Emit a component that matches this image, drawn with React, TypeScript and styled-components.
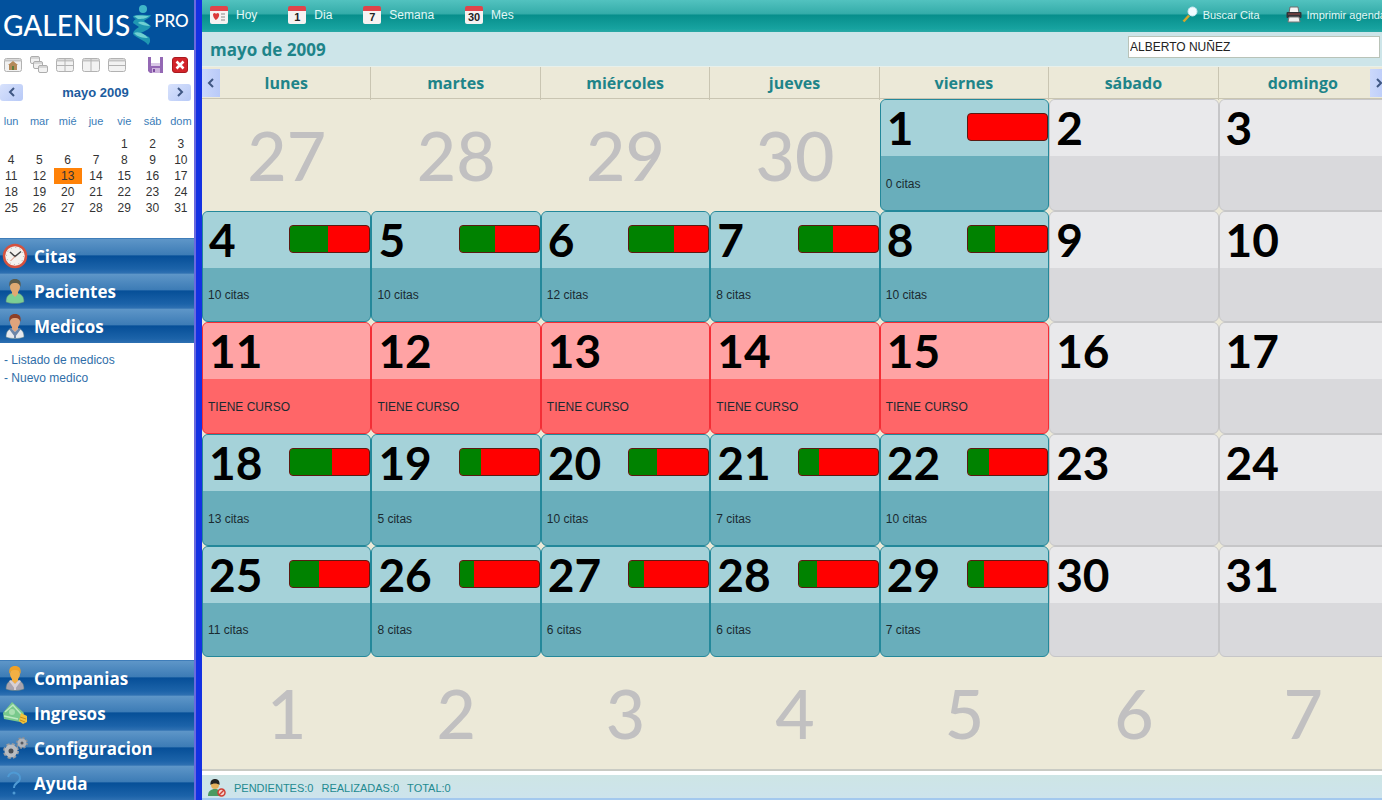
import React from "react";
import styled, { createGlobalStyle, css } from "styled-components";

const SANS = '"Liberation Sans", Arial, sans-serif';
const HUMANIST = '"Open Sans", "Noto Sans", sans-serif';
const NUMERALS = 'Lato, "Noto Sans", sans-serif';

const Global = createGlobalStyle`
  * { box-sizing: border-box; }
  body { margin: 0; background: #fff; font-family: ${SANS}; font-size: 12px; }
  button { border: 0; padding: 0; background: none; font: inherit; color: inherit; cursor: pointer; }
  svg { display: block; flex: none; }
`;

const Page = styled.div`
  display: flex;
  min-height: 100vh;
  overflow: hidden;
`;

/* ---------- sidebar ---------- */

const Sidebar = styled.aside`
  flex: none;
  width: 202px;
  display: flex;
  flex-direction: column;
  background: #fff;
  border-right: 6px solid #1431e2;
  box-shadow: inset -2px 0 0 #6a6ade;
  padding-right: 2px;
  overflow: hidden;
`;

const Brand = styled.header`
  display: flex;
  align-items: center;
  gap: 1px;
  height: 50px;
  padding: 0 3px;
  background: #02519d;
  color: #fff;
  font-family: ${NUMERALS};
  font-weight: 500;
`;

const BrandName = styled.span`
  font-size: 28px;
  line-height: 48px;
`;

const BrandEdition = styled.span`
  font-size: 17px;
  line-height: 32px;
  padding-bottom: 8px;
`;

const Tools = styled.div`
  display: flex;
  align-items: center;
  gap: 8px;
  height: 30px;
  padding: 0 6px 0 4px;
`;

const ToolButton = styled.button<{ $push?: boolean }>`
  ${(p) => p.$push && css`margin-left: auto;`}
`;

const MonthBar = styled.div`
  display: flex;
  align-items: center;
  justify-content: space-between;
  height: 24px;
  padding-right: 3px;
  color: #1c5c9e;
  font-size: 13px;
  font-weight: bold;
`;

const Arrow = styled.button`
  display: grid;
  place-items: center;
  width: 23px;
  height: 17px;
  border-radius: 3px;
  background: linear-gradient(135deg, #d8e2fc, #b7c9f7);
`;

const MiniTable = styled.table`
  width: 198px;
  margin: 8px 0 22px -3px;
  table-layout: fixed;
  border-collapse: collapse;
  text-align: center;
  color: #333;
`;

const MiniHead = styled.th`
  height: 24px;
  padding: 0 0 6px;
  font-size: 11px;
  font-weight: normal;
  color: #3a7cb8;
`;

const MiniDay = styled.td<{ $today?: boolean }>`
  height: 16px;
  padding: 0;
  line-height: 16px;
  background: ${(p) => (p.$today ? "#ff8208" : "transparent")};
`;

const NavButton = styled.button`
  display: flex;
  align-items: center;
  gap: 6px;
  width: 100%;
  height: 35px;
  padding: 0 2px;
  border-top: 1px solid #3f7db9;
  background: linear-gradient(#5e96c8 0%, #3d7cb6 46%, #064f98 50%, #1c63a9 88%, #2e70b2 100%);
  color: #fff;
  font-family: ${HUMANIST};
  font-size: 17px;
  font-weight: bold;
  text-align: left;
`;

const SubLinks = styled.ul`
  flex: 1;
  margin: 0;
  padding: 8px 4px;
  list-style: none;
  color: #2f6ea8;
  font-size: 12px;
  line-height: 18px;
`;

const SubLink = styled.a`
  color: inherit;
  text-decoration: none;
`;

/* ---------- main area ---------- */

const Main = styled.main`
  flex: 1;
  min-width: 0;
  display: flex;
  flex-direction: column;
  margin-right: -6px;
  background: #ece9d8;
`;

const Toolbar = styled.nav`
  display: flex;
  align-items: center;
  justify-content: space-between;
  height: 32px;
  padding: 0 2px 3px 8px;
  background: linear-gradient(#52c2bf 0%, #35adaa 42%, #078f8c 48%, #17a3a0 90%, #2ba9a6 100%);
  color: #e2f8f6;
`;

const Views = styled.div`
  display: flex;
  gap: 31px;
`;

const Actions = styled.div`
  display: flex;
  gap: 26px;
  font-size: 11px;
`;

const ToolbarButton = styled.button`
  display: flex;
  align-items: center;
  gap: 8px;
  white-space: nowrap;

  ${Actions} & {
    gap: 5px;
  }
`;

const TitleRow = styled.div`
  display: flex;
  align-items: center;
  justify-content: space-between;
  height: 35px;
  padding: 0 8px;
  background: #cde5e9;
  border-bottom: 1px solid #e8f0ea;
`;

const Title = styled.h1`
  margin: 0;
  padding-top: 2px;
  color: #1e8489;
  font-family: ${HUMANIST};
  font-size: 17px;
  line-height: 24px;
`;

const Search = styled.input`
  width: 252px;
  height: 22px;
  margin-bottom: 4px;
  padding: 0 1px;
  border: 1px solid #b9c3b8;
  border-radius: 0;
  outline: 0;
  background: #fff;
  color: #222;
  font: 12px ${SANS};
`;

const WeekHeader = styled.div`
  position: relative;
  display: grid;
  grid-template-columns: repeat(7, 1fr);
  height: 32px;
  border-bottom: 1px solid #c9c5b2;
`;

const WeekdayName = styled.div`
  border-right: 1px solid #c9c5b2;
  color: #1e8489;
  font-family: ${HUMANIST};
  font-size: 16px;
  font-weight: bold;
  line-height: 33px;
  text-align: center;
`;

const PageArrow = styled.button<{ $side: "left" | "right" }>`
  position: absolute;
  top: 2px;
  bottom: 1px;
  ${(p) => p.$side}: 0;
  display: grid;
  place-items: center;
  width: 18px;
  background: linear-gradient(90deg, #cbd8fb, #b9caf8);
`;

const MonthGrid = styled.div`
  flex: 1;
  display: grid;
  grid-template-columns: repeat(7, 1fr);
  grid-template-rows: repeat(6, minmax(90px, 1fr));
`;

type Kind = "busy" | "course" | "free";

const palette: Record<Kind, { line: string; top: string; bottom: string }> = {
  busy: { line: "#24889a", top: "#a5d2d9", bottom: "#69aebb" },
  course: { line: "#f32e36", top: "#ffa3a4", bottom: "#ff6668" },
  free: { line: "#c6c6c8", top: "#e9e9eb", bottom: "#d9d9dc" },
};

const OutsideDay = styled.div`
  display: grid;
  place-items: center;
  color: #c1c0c1;
  font-family: ${NUMERALS};
  font-size: 68px;
  font-weight: 500;
  line-height: 72px;
`;

const DayCell = styled.div<{ $kind: Kind }>`
  display: grid;
  grid-template-rows: 51% 49%;
  overflow: hidden;
  border: 1px solid ${(p) => palette[p.$kind].line};
  border-radius: 6px;
  background: ${(p) => palette[p.$kind].bottom};
`;

const DayTop = styled.div<{ $kind: Kind }>`
  display: flex;
  align-items: center;
  justify-content: space-between;
  padding-left: 6px;
  background: ${(p) => palette[p.$kind].top};
`;

const DayNumber = styled.span`
  color: #000;
  font-family: ${NUMERALS};
  font-size: 46px;
  font-weight: bold;
  line-height: 56px;
`;

const DayNote = styled.div`
  display: flex;
  align-items: center;
  padding: 2px 0 0 5px;
  color: #1a2a30;
`;

const Load = styled.div`
  width: 81px;
  height: 28px;
  margin-bottom: 2px;
  border: 1px solid #5a1a12;
  border-radius: 4px;
  overflow: hidden;
  background: #f00;
`;

const LoadFill = styled.div`
  height: 100%;
  background: #008200;
`;

const Status = styled.footer`
  display: flex;
  align-items: center;
  gap: 8px;
  height: 31px;
  padding: 6px 6px 0;
  border-top: 2px solid #c9cbc4;
  border-bottom: 2px solid #a3c8ee;
  background: linear-gradient(#fff 4px, #cde5e5 4px, #cde3ec);
  color: #238a90;
  font-size: 11px;
`;

/* ---------- drawings ---------- */

const Runner = () => (
  <svg width="22" height="44" viewBox="0 0 22 44">
    <circle cx="12" cy="6" r="4" fill="#3fb6c8" />
    <path d="M2 13c7-2 13-1 18-1-1 3-5 4-7 6l7 5c-2 4-7 5-10 7l8 4c2 3 1 6-1 8-3-5-12-7-15-11 0-3 3-5 6-7l-6-4c0-2 2-4 4-4-2 0-4-1-4-3z" fill="#1f97b2" />
    <path d="M3 13c6-1 11 0 15 0-3 3-8 3-11 3zM8 19c4-1 8 1 11 4-4 0-9-1-12-3zM3 30c4-2 10 0 14 5-5 0-11-1-14-5z" fill="#6fd0d2" />
  </svg>
);

const PaneIcon = ({ children }: { children: React.ReactNode }) => (
  <svg width="18" height="16" viewBox="0 0 18 16" fill="none" stroke="#b2b2b2">
    <rect x="0.5" y="1.5" width="17" height="13" rx="2" fill="#f2f2f2" />
    <path d="M1 3.5h16" strokeWidth="2" stroke="#c4c4c4" />
    {children}
  </svg>
);

const CascadeIcon = () => (
  <svg width="18" height="18" viewBox="0 0 18 18" fill="#f2f2f2" stroke="#adadad">
    <rect x="0.5" y="0.5" width="9" height="7" rx="1.5" />
    <rect x="3.5" y="5.5" width="9" height="7" rx="1.5" />
    <rect x="8.5" y="9.5" width="9" height="7" rx="1.5" />
    <path d="M1 2h8M4 7h8M9 11h8" stroke="#bbb" />
  </svg>
);

const SaveIcon = () => (
  <svg width="17" height="16" viewBox="0 0 17 16">
    <path d="M1 0h15v16H3l-2-2z" fill="#9468b4" />
    <path d="M4 0h9v8H4z" fill="#fff" />
    <path d="M4 6h9v3H4z" fill="#d9c9e6" />
    <path d="M5 11h8v5H5z" fill="#cdb3dc" />
    <path d="M6 12h2v3H6z" fill="#7c4aa0" />
  </svg>
);

const CloseIcon = () => (
  <svg width="16" height="16" viewBox="0 0 16 16">
    <rect x="0.5" y="0.5" width="15" height="15" rx="2.5" fill="#d3242a" stroke="#a81a20" />
    <path d="M4.5 4.5l7 7M11.5 4.5l-7 7" stroke="#fff" strokeWidth="2.6" />
  </svg>
);

const Chevron = ({ right }: { right?: boolean }) => (
  <svg width="8" height="10" viewBox="0 0 8 10" fill="none" stroke="#3f5783" strokeWidth="2">
    <path d={right ? "M2 1l4 4-4 4" : "M6 1L2 5l4 4"} />
  </svg>
);

const ClockIcon = () => (
  <svg width="26" height="26" viewBox="0 0 26 26">
    <circle cx="13" cy="13" r="11" fill="#f4f2ee" stroke="#d5523f" strokeWidth="2.5" />
    <circle cx="13" cy="13" r="8.5" fill="none" stroke="#a9a9a9" strokeDasharray="1 3.45" />
    <path d="M8 9l5 4.5 6-5" fill="none" stroke="#444" strokeWidth="1.5" />
    <path d="M13 13.5L8.5 18" stroke="#e08a70" />
  </svg>
);

const PersonIcon = ({ hair, skin, body, accent }: { hair: string; skin: string; body: string; accent?: string }) => (
  <svg width="26" height="26" viewBox="0 0 26 26">
    <path d="M4 24c0-6 3-9 9-9s9 3 9 9c-5 2-13 2-18 0z" fill={body} stroke="#5d7f83" strokeWidth="0.5" />
    <path d="M10 12h6v4l-3 3-3-3z" fill={skin} />
    {accent && <path d="M9 15l4 4 4-4 2 1-6 8-6-8zM12 19h2v6h-2z" fill={accent} />}
    <ellipse cx="13" cy="9" rx="5" ry="6" fill={skin} />
    <path d="M7.5 9C6.5 3 9 1 13 1s6.500 2 5.500 8c-1-3-2-4-5.500-4S8.500 6 7.500 9z" fill={hair} />
  </svg>
);

const MoneyIcon = () => (
  <svg width="26" height="26" viewBox="0 0 26 26">
    <path d="M1 13L10 2l12 11-4 9-16-3z" fill="#79c98c" />
    <path d="M3 12l8-7 8 9M2 16l14 3" fill="none" stroke="#bde8c2" strokeWidth="1.5" />
    <circle cx="10" cy="12" r="3" fill="#a9dfb0" />
    <path d="M19 13l6 3v6l-4 2-4-3z" fill="#f0c23c" />
    <path d="M18 17l6 2M18 20l5 2" stroke="#c68e1c" />
  </svg>
);

const GearsIcon = () => (
  <svg width="26" height="26" viewBox="0 0 26 26" fill="none">
    <circle cx="9" cy="16" r="6.5" stroke="#9a9da1" strokeWidth="3" strokeDasharray="3 2.1" />
    <circle cx="9" cy="16" r="4.5" fill="#4a4f56" stroke="#b9bcc0" strokeWidth="4" />
    <circle cx="20" cy="8" r="4.5" stroke="#8b8f94" strokeWidth="3" strokeDasharray="2 1.5" />
    <circle cx="20" cy="8" r="3" fill="#565b63" stroke="#b0b3b8" strokeWidth="3" />
  </svg>
);

const HelpIcon = () => (
  <svg width="26" height="26" viewBox="0 0 26 26" fill="none">
    <path d="M6 7c1-4 5-5 8-4 4 1 5 5 3 8-2 2-5 3-5 7" stroke="#4f9ad4" strokeWidth="2" />
    <circle cx="12" cy="23" r="1.5" fill="#4f9ad4" />
  </svg>
);

const Sheet = styled.span`
  display: grid;
  place-items: center;
  width: 18px;
  height: 18px;
  border-top: 5px solid #e0444a;
  border-radius: 2px;
  background: #f6f2f2;
  color: #222;
  font-size: 11px;
  font-weight: bold;
  line-height: 12px;
`;

const TodayMark = () => (
  <svg width="16" height="12" viewBox="0 0 16 12">
    <path d="M2 3c2-2 3 0 3 0s2-2 3 0c1 3-3 6-3 6S2 7 2 3z" fill="#dc3a3a" />
    <path d="M10 3h4M10 6h4M10 9h4" stroke="#8a8a8a" />
  </svg>
);

const SearchIcon = () => (
  <svg width="16" height="17" viewBox="0 0 16 17">
    <path d="M1.5 15.5L7 9.500" stroke="#d6a72a" strokeWidth="2.5" />
    <circle cx="10.5" cy="5.5" r="4.5" fill="#f2fbff" stroke="#c7e6ef" />
  </svg>
);

const PrinterIcon = () => (
  <svg width="16" height="17" viewBox="0 0 16 17">
    <path d="M4 1h8l1 6H3z" fill="#f4f4f4" stroke="#6c6c6c" />
    <rect x="0.5" y="6" width="15" height="6" rx="1" fill="#30343a" />
    <path d="M2 8h12" stroke="#a34a44" />
    <path d="M3 11h10l1 5H2z" fill="#f0f0f0" stroke="#777" />
  </svg>
);

const BlockedUserIcon = () => (
  <svg width="18" height="18" viewBox="0 0 18 18">
    <path d="M0 17c0-5 3-7 7-7s6 2 6 7z" fill="#4b9a62" />
    <circle cx="7" cy="6" r="4" fill="#e3b05e" />
    <path d="M2.5 6C2 2 4 0 7 0s5 2 4.500 6c-2-2-7-2-9 0z" fill="#222" />
    <circle cx="13.5" cy="13.5" r="3.5" fill="#f3d2cc" stroke="#cf3f35" strokeWidth="1.5" />
    <path d="M11 16l5-5" stroke="#cf3f35" strokeWidth="1.5" />
  </svg>
);

/* ---------- data ---------- */

const miniWeeks = [
  ["", "", "", "", "1", "2", "3"],
  ["4", "5", "6", "7", "8", "9", "10"],
  ["11", "12", "13", "14", "15", "16", "17"],
  ["18", "19", "20", "21", "22", "23", "24"],
  ["25", "26", "27", "28", "29", "30", "31"],
];

const weekdays = ["lunes", "martes", "miércoles", "jueves", "viernes", "sábado", "domingo"];

/* day -> [appointments, share of the day already taken in percent] */
const bookings: Record<number, [number, number]> = {
  1: [0, 0],
  4: [10, 48], 5: [10, 45], 6: [12, 56], 7: [8, 44], 8: [10, 34],
  18: [13, 52], 19: [5, 27], 20: [10, 35], 21: [7, 26], 22: [10, 26],
  25: [11, 36], 26: [8, 18], 27: [6, 19], 28: [6, 23], 29: [7, 20],
};

const monthDays = Array.from({ length: 31 }, (_, i) => i + 1);

const Day = ({ day }: { day: number }) => {
  const booking = bookings[day];
  const kind: Kind = booking ? "busy" : day >= 11 && day <= 15 ? "course" : "free";
  return (
    <DayCell $kind={kind}>
      <DayTop $kind={kind}>
        <DayNumber>{day}</DayNumber>
        {booking && (
          <Load>
            <LoadFill style={{ width: `${booking[1]}%` }} />
          </Load>
        )}
      </DayTop>
      <DayNote>{booking ? `${booking[0]} citas` : kind === "course" ? "TIENE CURSO" : ""}</DayNote>
    </DayCell>
  );
};

export default function App() {
  return (
    <Page>
      <Global />
      <Sidebar>
        <Brand>
          <BrandName>GALENUS</BrandName>
          <Runner />
          <BrandEdition>PRO</BrandEdition>
        </Brand>
        <Tools>
          <ToolButton aria-label="Inicio">
            <PaneIcon>
              <path d="M9 4l5 4h-1v5H5V8H4z" fill="#b58a5a" stroke="none" />
              <path d="M8 9h2v4H8z" fill="#5e7d3c" stroke="none" />
            </PaneIcon>
          </ToolButton>
          <ToolButton aria-label="Cascada"><CascadeIcon /></ToolButton>
          <ToolButton aria-label="Mosaico"><PaneIcon><path d="M9 2v12M1 8.5h16" /></PaneIcon></ToolButton>
          <ToolButton aria-label="Columnas"><PaneIcon><path d="M9 2v12" /></PaneIcon></ToolButton>
          <ToolButton aria-label="Filas"><PaneIcon><path d="M1 8.5h16" /></PaneIcon></ToolButton>
          <ToolButton aria-label="Guardar" $push><SaveIcon /></ToolButton>
          <ToolButton aria-label="Cerrar"><CloseIcon /></ToolButton>
        </Tools>
        <MonthBar>
          <Arrow aria-label="Mes anterior"><Chevron /></Arrow>
          mayo 2009
          <Arrow aria-label="Mes siguiente"><Chevron right /></Arrow>
        </MonthBar>
        <MiniTable>
          <thead>
            <tr>
              {["lun", "mar", "mié", "jue", "vie", "sáb", "dom"].map((d) => (
                <MiniHead key={d} scope="col">{d}</MiniHead>
              ))}
            </tr>
          </thead>
          <tbody>
            {miniWeeks.map((week, i) => (
              <tr key={i}>
                {week.map((d, j) => (
                  <MiniDay key={j} $today={d === "13"}>{d}</MiniDay>
                ))}
              </tr>
            ))}
          </tbody>
        </MiniTable>
        <NavButton><ClockIcon />Citas</NavButton>
        <NavButton><PersonIcon hair="#5b5a4a" skin="#e0a972" body="#7ccf94" />Pacientes</NavButton>
        <NavButton><PersonIcon hair="#8c3f28" skin="#e0a47c" body="#e6e9ee" accent="#6c86a8" />Medicos</NavButton>
        <SubLinks>
          <li>- <SubLink href="#listado">Listado de medicos</SubLink></li>
          <li>- <SubLink href="#nuevo">Nuevo medico</SubLink></li>
        </SubLinks>
        <NavButton><PersonIcon hair="#f0a128" skin="#f3b044" body="#a9a4ae" accent="#d8d0d4" />Companias</NavButton>
        <NavButton><MoneyIcon />Ingresos</NavButton>
        <NavButton><GearsIcon />Configuracion</NavButton>
        <NavButton><HelpIcon />Ayuda</NavButton>
      </Sidebar>

      <Main>
        <Toolbar>
          <Views>
            <ToolbarButton><Sheet><TodayMark /></Sheet>Hoy</ToolbarButton>
            <ToolbarButton><Sheet>1</Sheet>Dia</ToolbarButton>
            <ToolbarButton><Sheet>7</Sheet>Semana</ToolbarButton>
            <ToolbarButton><Sheet>30</Sheet>Mes</ToolbarButton>
          </Views>
          <Actions>
            <ToolbarButton><SearchIcon />Buscar Cita</ToolbarButton>
            <ToolbarButton><PrinterIcon />Imprimir agenda</ToolbarButton>
          </Actions>
        </Toolbar>
        <TitleRow>
          <Title>mayo de 2009</Title>
          <Search aria-label="Médico" defaultValue="ALBERTO NUÑEZ" />
        </TitleRow>
        <WeekHeader>
          {weekdays.map((name) => (
            <WeekdayName key={name}>{name}</WeekdayName>
          ))}
          <PageArrow $side="left" aria-label="Anterior"><Chevron /></PageArrow>
          <PageArrow $side="right" aria-label="Siguiente"><Chevron right /></PageArrow>
        </WeekHeader>
        <MonthGrid>
          {[27, 28, 29, 30].map((d) => (
            <OutsideDay key={`previous-${d}`}>{d}</OutsideDay>
          ))}
          {monthDays.map((d) => (
            <Day key={d} day={d} />
          ))}
          {[1, 2, 3, 4, 5, 6, 7].map((d) => (
            <OutsideDay key={`next-${d}`}>{d}</OutsideDay>
          ))}
        </MonthGrid>
        <Status>
          <BlockedUserIcon />
          <span>PENDIENTES:0</span>
          <span>REALIZADAS:0</span>
          <span>TOTAL:0</span>
        </Status>
      </Main>
    </Page>
  );
}
